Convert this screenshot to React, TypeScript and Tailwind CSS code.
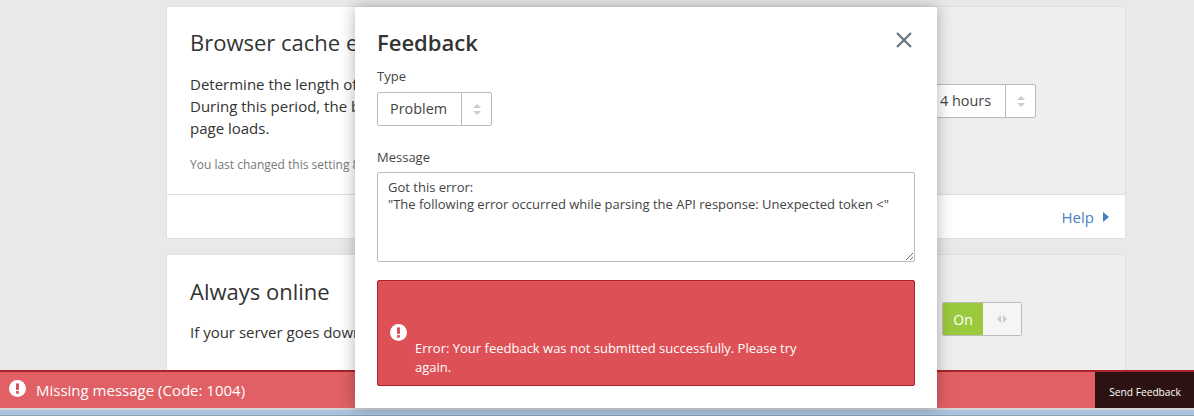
function Alert({ className }: { className: string }) {
  return (
    <svg viewBox="0 0 16 16" className={className} aria-hidden="true">
      <circle cx="8" cy="8" r="8" fill="#fff" />
      <rect x="6.6" y="3" width="2.8" height="6.4" rx="1" fill="#d94f55" />
      <rect x="6.7" y="10.4" width="2.6" height="2.6" rx="0.6" fill="#d94f55" />
    </svg>
  );
}

function Spinner() {
  return (
    <div className="flex flex-col items-center gap-[3px]">
      <div className="w-0 h-0 border-x-[4px] border-x-transparent border-b-[4px] border-b-[#ccc]" />
      <div className="w-0 h-0 border-x-[4px] border-x-transparent border-t-[4px] border-t-[#ccc]" />
    </div>
  );
}

function Select({ label, width }: { label: string; width: string }) {
  return (
    <div className={`flex h-[34px] shrink-0 rounded-[2px] border border-[#bbb] bg-white text-[14.4px] text-[#444] ${width}`}>
      <div className="flex-1 flex items-center pl-[12px]">{label}</div>
      <div className="w-[30px] flex items-center justify-center border-l border-[#bbb]">
        <Spinner />
      </div>
    </div>
  );
}

export default function App() {
  return (
    <div className="relative h-[416px] overflow-hidden flex flex-col bg-[#e9e9e9] font-['Open_Sans',sans-serif] text-[#333]">
      <main className="flex-1 min-h-0 overflow-hidden pt-[6px] pl-[166px]">
        <div className="w-[960px] flex flex-col gap-[15px]">
          {/* Browser cache card */}
          <section className="h-[233px] flex flex-col rounded-[2px] border border-[#e0e0e0] bg-white">
            <div className="flex-1 flex">
              <div className="w-[640px] pl-[23px] pt-[21px]">
                <h2 className="text-[22px] leading-[28px]">Browser cache expiration</h2>
                <p className="mt-[17px] text-[15px] leading-[22px]">
                  Determine the length of time a visitor's browser caches files.
                  <br />
                  During this period, the browser loads files from its local cache.
                  <br />
                  page loads.
                </p>
                <p className="mt-[17px] text-[12px] leading-[18px] text-[#777]">You last changed this setting 8 months ago.</p>
              </div>
              <div className="flex-1 flex justify-end items-start bg-[#eeeeee] pr-[89px] pt-[77px]">
                <Select label="4 hours" width="w-[109px]" />
              </div>
            </div>
            <div className="h-[44px] flex items-center justify-end gap-[9px] pr-[16px] pt-[1px] border-t border-[#e0e0e0] bg-white text-[#4a7fc1] text-[15px]">
              Help
              <div className="w-0 h-0 border-y-[5px] border-y-transparent border-l-[6px] border-l-[#3f7fc4]" />
            </div>
          </section>

          {/* Always online card */}
          <section className="h-[200px] flex rounded-[2px] border border-[#e0e0e0] bg-white">
            <div className="w-[640px] pl-[23px] pt-[22px]">
              <h2 className="text-[22px] leading-[28px]">Always online</h2>
              <p className="mt-[16px] text-[15px] leading-[22px]">If your server goes down, we will keep serving cached pages.</p>
            </div>
            <div className="flex-1 flex justify-end items-start bg-[#eeeeee] pr-[103px] pt-[47px]">
              <div className="flex h-[34px] w-[80px] rounded-[2px] border border-[#bbb] text-[14px]">
                <div className="w-[40px] flex items-center justify-center bg-[#9bc93d] text-white">On</div>
                <div className="flex-1 flex items-center justify-center gap-[2px] bg-[#f5f5f5]">
                  <div className="w-0 h-0 border-y-[4px] border-y-transparent border-r-[4px] border-r-[#ccc]" />
                  <div className="w-0 h-0 border-y-[4px] border-y-transparent border-l-[4px] border-l-[#ccc]" />
                </div>
              </div>
            </div>
          </section>
        </div>
      </main>

      {/* Windows taskbar sliver */}
      <div className="h-[8px] shrink-0 border-t-2 border-b border-t-[#d4d4d4] border-b-[#8a9fb5] bg-[#a9c3de]" />

      {/* Error bar */}
      <div className="absolute left-0 right-0 bottom-[8px] h-[38px] flex justify-between border-t-2 border-[#a8232a] bg-[#e06065] text-white">
        <div className="flex items-center gap-[10px] pl-[9px] text-[15px]">
          <Alert className="w-[17px] h-[17px] -mt-[3px]" />
          Missing message (Code: 1004)
        </div>
        <button className="w-[99px] pt-[5px] pl-[1px] flex items-center justify-center bg-[#2d1212] text-[10.2px] text-white">Send Feedback</button>
      </div>

      {/* Modal */}
      <div className="absolute left-[355px] top-[7px] w-[582px] h-[401px] rounded-t-[2px] bg-white px-[22px] shadow-[0_0_16px_rgba(0,0,0,0.3)]">
        <div className="flex items-start justify-between pt-[20px]">
          <h1 className="text-[22px] leading-[30px] font-semibold">Feedback</h1>
          <svg viewBox="0 0 16 16" className="w-[16px] h-[16px] mt-[5px] mr-[3px] stroke-[#66747f]" aria-hidden="true">
            <path d="M1 1 L15 15 M15 1 L1 15" strokeWidth="2.2" />
          </svg>
        </div>
        <label className="block mt-[9px] text-[13px] leading-[20px] text-[#444]">Type</label>
        <div className="mt-[6px]">
          <Select label="Problem" width="w-[115px]" />
        </div>
        <label className="block mt-[21px] text-[13px] leading-[20px] text-[#444]">Message</label>
        <textarea
          readOnly
          className="block mt-[5px] w-[538px] h-[90px] rounded-[2px] border border-[#bbb] px-[10px] pt-[6px] text-[13px] leading-[17px] text-[#444] outline-none"
          value={'Got this error:\n"The following error occurred while parsing the API response: Unexpected token <"'}
        />
        <div className="mt-[18px] w-[538px] h-[106px] rounded-[2px] border border-[#a8232a] bg-[#dd5055] text-white text-[13px] leading-[19px] flex">
          <Alert className="w-[17px] h-[17px] ml-[12px] mt-[43px] shrink-0" />
          <p className="ml-[8px] mt-[58px] w-[410px]">Error: Your feedback was not submitted successfully. Please try again.</p>
        </div>
      </div>
    </div>
  );
}
